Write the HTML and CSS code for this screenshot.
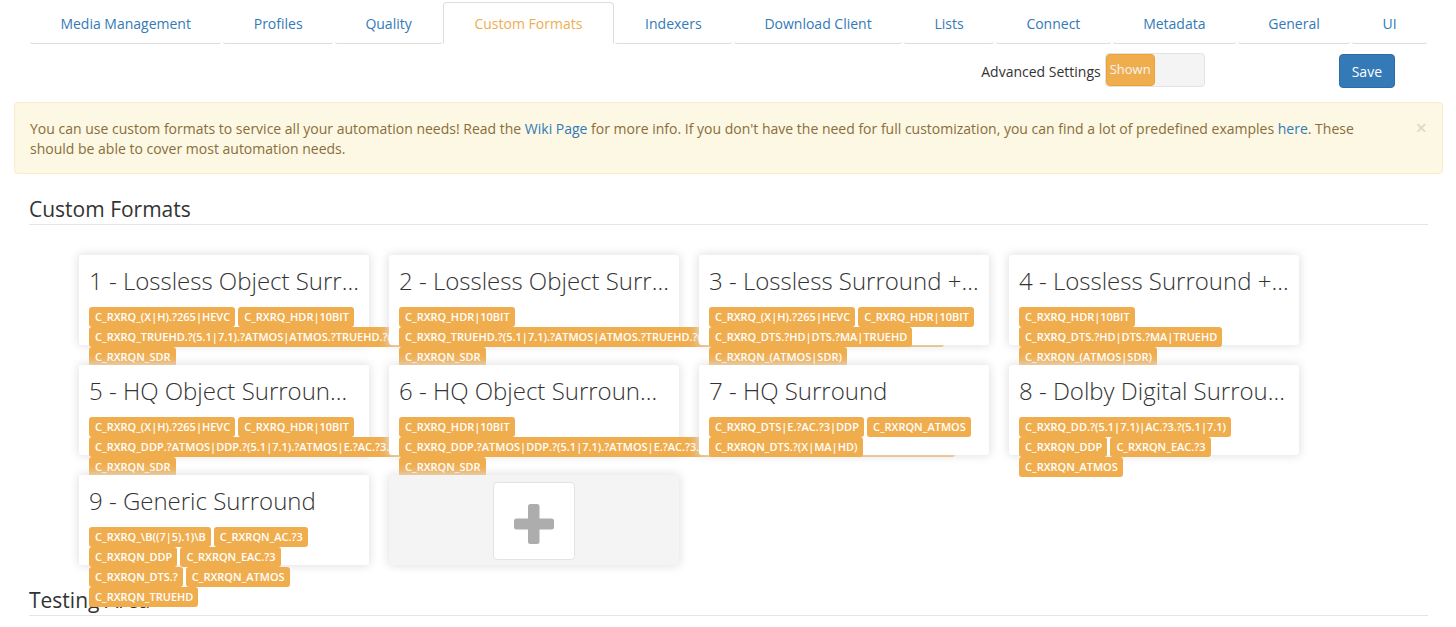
FILE: index.html
```html
<!DOCTYPE html>
<html lang="en">
<head>
<meta charset="utf-8">
<title>Settings - Custom Formats</title>
<link rel="stylesheet" href="styles.css">
</head>
<body>
<nav class="tabs" aria-label="Settings sections">
  <a class="tab" href="#media">Media Management</a>
  <a class="tab" href="#profiles">Profiles</a>
  <a class="tab" href="#quality">Quality</a>
  <a class="tab active" href="#formats" aria-current="page">Custom Formats</a>
  <a class="tab" href="#indexers">Indexers</a>
  <a class="tab" href="#client">Download Client</a>
  <a class="tab" href="#lists">Lists</a>
  <a class="tab" href="#connect">Connect</a>
  <a class="tab" href="#metadata">Metadata</a>
  <a class="tab" href="#general">General</a>
  <a class="tab" href="#ui">UI</a>
</nav>

<div class="toolbar">
  <div class="advanced">
    <label for="advanced">Advanced Settings</label>
    <span class="toggle">
      <input id="advanced" type="checkbox" checked>
      <span class="knob" aria-hidden="true">Shown</span>
    </span>
  </div>
  <button class="save" type="button">Save</button>
</div>

<div class="alert" role="alert">
  <p class="alert-text">You can use custom formats to service all your automation needs! Read the <a href="#wiki">Wiki Page</a> for more info. If you don't have the need for full customization, you can find a lot of predefined examples <a href="#examples">here</a>. These should be able to cover most automation needs.</p>
  <button class="close" type="button" aria-label="Close">×</button>
</div>

<main class="content">
  <h2 class="legend">Custom Formats</h2>
  <ul class="cards">
    <li class="card">
      <h3 class="name">1 - Lossless Object Surround + HDR</h3>
      <div class="tags">
        <span class="tag">C_RXRQ_(X|H).?265|HEVC</span>
        <span class="tag">C_RXRQ_HDR|10BIT</span>
        <span class="tag">C_RXRQ_TRUEHD.?(5.1|7.1).?ATMOS|ATMOS.?TRUEHD.?(5.1|7.1)|TRUEHD.?ATMOS.?(5.1|7.1)|(DTS.?X)</span>
        <span class="tag">C_RXRQN_SDR</span>
      </div>
    </li>
    <li class="card">
      <h3 class="name">2 - Lossless Object Surround</h3>
      <div class="tags">
        <span class="tag">C_RXRQ_HDR|10BIT</span>
        <span class="tag">C_RXRQ_TRUEHD.?(5.1|7.1).?ATMOS|ATMOS.?TRUEHD.?(5.1|7.1)|TRUEHD.?ATMOS.?(5.1|7.1)|(DTS.?X)</span>
        <span class="tag">C_RXRQN_SDR</span>
      </div>
    </li>
    <li class="card">
      <h3 class="name">3 - Lossless Surround + HDR</h3>
      <div class="tags">
        <span class="tag">C_RXRQ_(X|H).?265|HEVC</span>
        <span class="tag">C_RXRQ_HDR|10BIT</span>
        <span class="tag">C_RXRQ_DTS.?HD|DTS.?MA|TRUEHD</span>
        <span class="tag">C_RXRQN_(ATMOS|SDR)</span>
      </div>
    </li>
    <li class="card">
      <h3 class="name">4 - Lossless Surround + HDR</h3>
      <div class="tags">
        <span class="tag">C_RXRQ_HDR|10BIT</span>
        <span class="tag">C_RXRQ_DTS.?HD|DTS.?MA|TRUEHD</span>
        <span class="tag">C_RXRQN_(ATMOS|SDR)</span>
      </div>
    </li>
    <li class="card">
      <h3 class="name">5 - HQ Object Surround + HDR</h3>
      <div class="tags">
        <span class="tag">C_RXRQ_(X|H).?265|HEVC</span>
        <span class="tag">C_RXRQ_HDR|10BIT</span>
        <span class="tag">C_RXRQ_DDP.?ATMOS|DDP.?(5.1|7.1).?ATMOS|E.?AC.?3.?ATMOS|E.?AC.?3.?(5.1|7.1).?ATMOS|(DDP.?7.1)</span>
        <span class="tag">C_RXRQN_SDR</span>
      </div>
    </li>
    <li class="card">
      <h3 class="name">6 - HQ Object Surround + HDR</h3>
      <div class="tags">
        <span class="tag">C_RXRQ_HDR|10BIT</span>
        <span class="tag">C_RXRQ_DDP.?ATMOS|DDP.?(5.1|7.1).?ATMOS|E.?AC.?3.?ATMOS|E.?AC.?3.?(5.1|7.1).?ATMOS|(DDP.?7.1)</span>
        <span class="tag">C_RXRQN_SDR</span>
      </div>
    </li>
    <li class="card">
      <h3 class="name">7 - HQ Surround</h3>
      <div class="tags">
        <span class="tag">C_RXRQ_DTS|E.?AC.?3|DDP</span>
        <span class="tag">C_RXRQN_ATMOS</span>
        <span class="tag">C_RXRQN_DTS.?(X|MA|HD)</span>
      </div>
    </li>
    <li class="card">
      <h3 class="name">8 - Dolby Digital Surround</h3>
      <div class="tags">
        <span class="tag">C_RXRQ_DD.?(5.1|7.1)|AC.?3.?(5.1|7.1)</span>
        <span class="tag">C_RXRQN_DDP</span>
        <span class="tag">C_RXRQN_EAC.?3</span>
        <span class="tag">C_RXRQN_ATMOS</span>
      </div>
    </li>
    <li class="card">
      <h3 class="name">9 - Generic Surround</h3>
      <div class="tags">
        <span class="tag">C_RXRQ_\B((7|5).1)\B</span>
        <span class="tag">C_RXRQN_AC.?3</span>
        <span class="tag">C_RXRQN_DDP</span>
        <span class="tag">C_RXRQN_EAC.?3</span>
        <span class="tag">C_RXRQN_DTS.?</span>
        <span class="tag">C_RXRQN_ATMOS</span>
        <span class="tag">C_RXRQN_TRUEHD</span>
      </div>
    </li>
    <li class="card card-add">
      <button class="add" type="button" aria-label="Add custom format">
        <svg width="40" height="40" viewBox="0 0 40 40" aria-hidden="true"><path fill="#adadad" d="M16.500 0h6.500a2.500 2.500 0 0 1 2.500 2.500v12h12a2.500 2.500 0 0 1 2.500 2.500v6a2.500 2.500 0 0 1-2.500 2.500h-12v12a2.500 2.500 0 0 1-2.500 2.500h-6.500a2.500 2.500 0 0 1-2.500-2.500v-12h-11.500a2.500 2.500 0 0 1-2.500-2.500v-6a2.500 2.500 0 0 1 2.500-2.500h11.500v-12a2.500 2.500 0 0 1 2.500-2.500z"/></svg>
      </button>
    </li>
  </ul>
  <h2 class="legend">Testing Area</h2>
</main>
</body>
</html>
```
FILE: styles.css
```css
* {
  box-sizing: border-box;
}

body {
  margin: 0;
  padding: 2px 13px 0 14px;
  background: #fff;
  color: #333;
  font: 14px/20px "Open Sans", sans-serif;
}

a {
  color: #337ab7;
  text-decoration: none;
}

button {
  font: inherit;
  cursor: pointer;
}

.tabs {
  display: flex;
  margin: 0 15px;
}

.tab {
  flex: 1 1 auto;
  padding: 11px 30px 9px;
  border: 1px solid transparent;
  border-bottom-color: #ddd;
  border-radius: 4px;
  text-align: center;
  white-space: nowrap;
}

.tab.active {
  border-color: #ddd #ddd transparent;
  border-radius: 4px 4px 0 0;
  color: #f0ad4e;
}

.toolbar {
  display: flex;
  justify-content: flex-end;
  align-items: flex-end;
  gap: 134px;
  padding: 9px 48px 14px 0;
}

.advanced {
  display: flex;
  gap: 4px;
  padding-bottom: 1px;
}

.advanced label {
  padding-top: 9px;
}

.toggle {
  position: relative;
  display: block;
  width: 100px;
  height: 34px;
  border: 1px solid #e3e3e3;
  border-radius: 4px;
  background: #f4f4f4;
}

.toggle input {
  position: absolute;
  inset: 0;
  width: 100%;
  height: 100%;
  margin: 0;
  opacity: 0;
}

.knob {
  display: block;
  width: 49px;
  height: 32px;
  border: 1px solid #eea236;
  border-radius: 4px;
  background: #f0ad4e;
  color: #f4f4f4;
  font-size: 13px;
  line-height: 28px;
  text-align: center;
}

.save {
  padding: 7px 12px 5px;
  border: 1px solid #2e6da4;
  border-radius: 4px;
  background: #337ab7;
  color: #fff;
}

.alert {
  display: flex;
  align-items: flex-start;
  gap: 9px;
  padding: 16px 15px 14px;
  border: 1px solid #faebcc;
  border-radius: 4px;
  background: #fcf8e3;
  color: #8a6d3b;
}

.alert-text {
  flex: 1;
  margin: 0;
  padding-right: 12px;
}

.close {
  padding: 0;
  border: 0;
  background: none;
  color: #dedac8;
  font-size: 20px;
  font-weight: 600;
  line-height: 18px;
}

.content {
  padding: 20px 15px 0;
}

.legend {
  margin: 0;
  border-bottom: 1px solid #e5e5e5;
  font-size: 21px;
  font-weight: 400;
  line-height: 30px;
}

.cards {
  display: grid;
  grid-template-columns: repeat(auto-fill, 290px);
  grid-auto-rows: 90px;
  gap: 20px;
  margin: 30px 0 20px;
  padding: 0 0 0 50px;
  list-style: none;
}

.card {
  position: relative;
  padding: 10px;
  border-radius: 3px;
  background: #fff;
  box-shadow: 0 0 10px 1px #e1e1e1;
}

.name {
  margin: 0 0 10px;
  overflow: hidden;
  font-size: 24px;
  font-weight: 300;
  line-height: 32px;
  text-overflow: ellipsis;
  white-space: nowrap;
}

.tags {
  display: flex;
  flex-wrap: wrap;
  column-gap: 3px;
}

.tag {
  flex: none;
  padding: 0 5px 0 6px;
  border-radius: 3px;
  background: #f0ad4e;
  color: #fff;
  font-size: 11px;
  font-weight: 600;
  line-height: 20px;
  white-space: nowrap;
}

.card-add {
  display: flex;
  justify-content: center;
  padding: 7px 10px 5px;
  background: #f4f4f4;
}

.add {
  display: flex;
  align-items: center;
  justify-content: center;
  padding: 5px 20px 0;
  border: 1px solid #e3e3e3;
  border-radius: 4px;
  background: #fff;
}
```
